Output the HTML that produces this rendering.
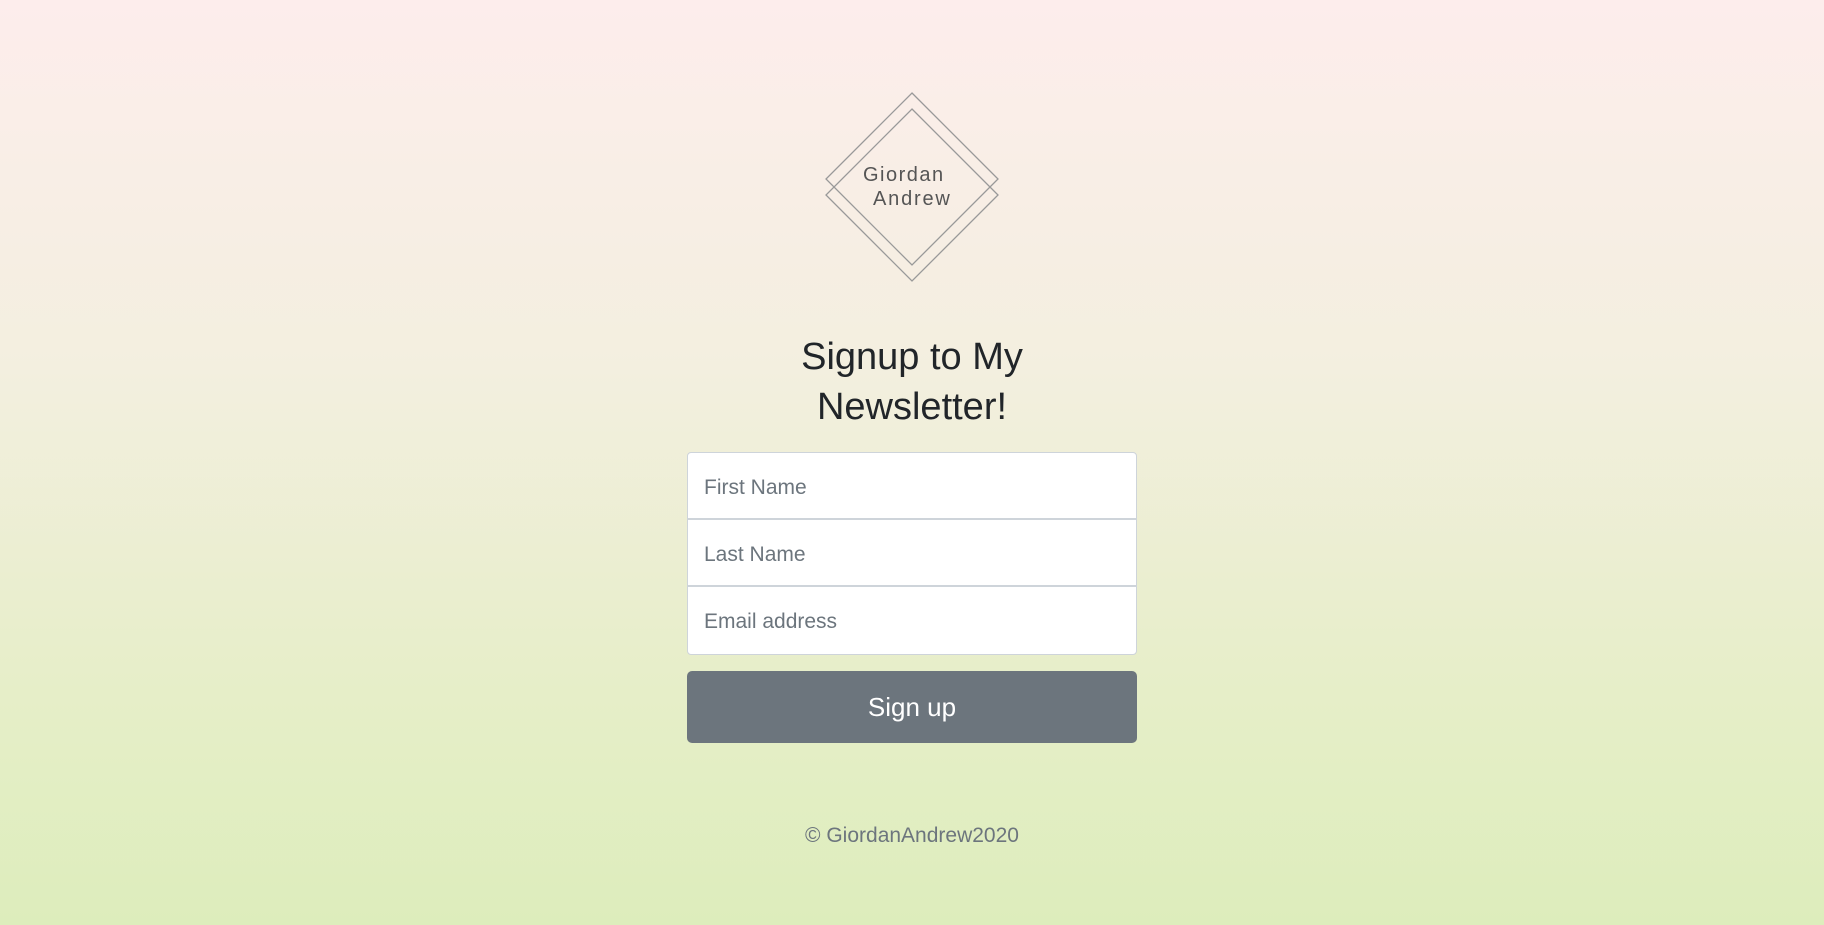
<!DOCTYPE html>
<html><head><meta charset="utf-8"><style>
html,body{margin:0;padding:0}
body{width:1824px;height:925px;overflow:hidden;background:linear-gradient(#fdedec,#f3efdf 40%,#e6eec8 75%,#ddedbc);font-family:"Liberation Sans",sans-serif;position:relative}
.h{position:absolute;left:0;width:1824px;text-align:center;color:#212529;font-size:38px;line-height:50px}
.form{position:absolute;left:687px;top:452px;width:450px;height:203px;border:1px solid #ced4da;border-radius:4px;background:#fff;box-sizing:border-box}
.row{height:67px;box-sizing:border-box;border-bottom:2px solid #ced4da;font-size:21px;color:#6c757d;padding-left:16px;line-height:70px}
.row:last-child{border-bottom:none}
.btn{position:absolute;left:687px;top:671px;width:450px;height:72px;background:#6c757d;border-radius:5px;color:#fff;font-size:26px;text-align:center;line-height:72px}
.foot{position:absolute;left:0;width:1824px;top:824px;text-align:center;color:#6c757d;font-size:21px}
</style></head><body>
<svg width="1824" height="300" style="position:absolute;left:0;top:0">
<polygon points="912,93 998,179 912,265 826,179" fill="none" stroke="#999" stroke-width="1.3"/>
<polygon points="912,109 998,195 912,281 826,195" fill="none" stroke="#999" stroke-width="1.3"/>
<text x="863" y="181" font-family="Liberation Sans,sans-serif" font-size="20" fill="#555" letter-spacing="1.5">Giordan</text>
<text x="873" y="205" font-family="Liberation Sans,sans-serif" font-size="20" fill="#555" letter-spacing="1.8">Andrew</text>
</svg>
<div class="h" style="top:332px">Signup to My</div>
<div class="h" style="top:382px">Newsletter!</div>
<div class="form"><div class="row">First Name</div><div class="row">Last Name</div><div class="row">Email address</div></div>
<div class="btn">Sign up</div>
<div class="foot">© GiordanAndrew2020</div>
</body></html>
